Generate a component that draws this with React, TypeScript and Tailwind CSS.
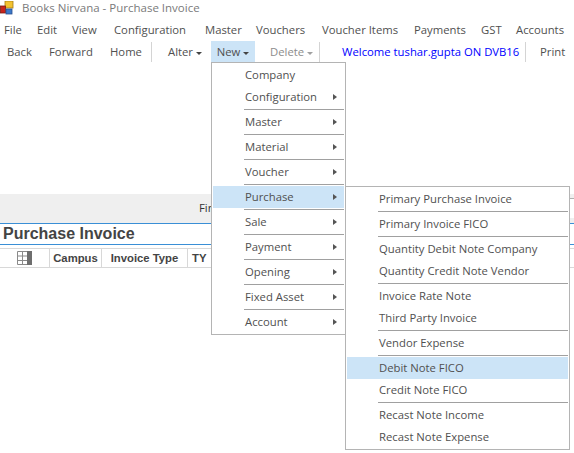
const menuBar = [
  { label: 'File', width: 'w-[33px]' },
  { label: 'Edit', width: 'w-[35px]' },
  { label: 'View', width: 'w-[42px]' },
  { label: 'Configuration', width: 'w-[91px]' },
  { label: 'Master', width: 'w-[51px]' },
  { label: 'Vouchers', width: 'w-[66px]' },
  { label: 'Voucher Items', width: 'w-[92px]' },
  { label: 'Payments', width: 'w-[67px]' },
  { label: 'GST', width: 'w-[35px]' },
  { label: 'Accounts', width: 'w-[58px]' },
];

const mainMenu = [
  { label: 'Company' },
  { label: 'Configuration', arrow: true, sep: true },
  { label: 'Master', arrow: true, sep: true },
  { label: 'Material', arrow: true, sep: true },
  { label: 'Voucher', arrow: true, sep: true },
  { label: 'Purchase', arrow: true, sep: true, active: true },
  { label: 'Sale', arrow: true, sep: true },
  { label: 'Payment', arrow: true, sep: true },
  { label: 'Opening', arrow: true, sep: true },
  { label: 'Fixed Asset', arrow: true, sep: true },
  { label: 'Account', arrow: true },
];

const purchaseMenu = [
  { label: 'Primary Purchase Invoice', sep: true },
  { label: 'Primary Invoice FICO', sep: true },
  { label: 'Quantity Debit Note Company' },
  { label: 'Quantity Credit Note Vendor', sep: true },
  { label: 'Invoice Rate Note' },
  { label: 'Third Party Invoice', sep: true },
  { label: 'Vendor Expense', sep: true },
  { label: 'Debit Note FICO', active: true },
  { label: 'Credit Note FICO', sep: true },
  { label: 'Recast Note Income' },
  { label: 'Recast Note Expense' },
];

type Item = { label: string; arrow?: boolean; sep?: boolean; active?: boolean };

const Caret = ({ muted }: { muted?: boolean }) => (
  <span
    className={`ml-[3px] mt-[1px] h-0 w-0 border-x-[3px] border-t-[3px] border-x-transparent ${
      muted ? 'border-t-[#a0a0a0]' : 'border-t-[#444444]'
    }`}
  />
);

const Separator = () => <span className="h-[20px] w-px bg-[#d4d4d4]" />;

const DropMenu = ({ items, className }: { items: Item[]; className: string }) => (
  <div className={`absolute z-10 flex flex-col border border-[#b4b4b4] bg-white p-px ${className}`}>
    {items.map((item) => (
      <div key={item.label}>
        <div className={`flex h-[22px] items-center justify-between pl-[32px] ${item.active ? 'bg-[#cce4f7]' : ''}`}>
          <span className="whitespace-nowrap">{item.label}</span>
          {item.arrow && (
            <span className="mr-[7px] h-0 w-0 border-y-[3.5px] border-l-[4px] border-y-transparent border-l-[#555555]" />
          )}
        </div>
        {item.sep && (
          <div className="flex h-[3px] items-center pl-[31px]">
            <div className="h-px w-full bg-[#a0a0a0]" />
          </div>
        )}
      </div>
    ))}
  </div>
);

export default function App() {
  return (
    <div className="relative h-[453px] w-[574px] overflow-hidden bg-white font-['Open_Sans',sans-serif] text-[11.3px] text-[#505050]">
      {/* Title bar */}
      <div className="flex h-[20px] items-start">
        <svg width="14" height="14" viewBox="0 0 14 14" className="mt-px">
          <rect x="5" y="0" width="8" height="7" fill="#f2c230" stroke="#a87a10" strokeWidth="0.8" />
          <rect x="0.5" y="5" width="5" height="7" fill="#c8241c" stroke="#7a1810" strokeWidth="0.8" />
          <rect x="6" y="8" width="6" height="5" fill="#3c78c8" stroke="#2a4f90" strokeWidth="0.8" />
        </svg>
        <span className="ml-[8px] text-[11.5px] leading-[16px] text-[#7a7a7a]">Books Nirvana - Purchase Invoice</span>
      </div>

      {/* Menu bar */}
      <div className="flex h-[21px] items-center pl-[4px]">
        {menuBar.map((item) => (
          <span key={item.label} className={`whitespace-nowrap ${item.width}`}>
            {item.label}
          </span>
        ))}
      </div>

      {/* Toolbar */}
      <div className="flex h-[21px] items-center">
        <span className="ml-[7px] w-[42px] pt-[2px]">Back</span>
        <span className="w-[61px] pt-[2px]">Forward</span>
        <span className="w-[41px] pt-[2px]">Home</span>
        <Separator />
        <span className="ml-[16px] flex w-[43px] items-center pt-[2px]">
          Alter
          <Caret />
        </span>
        <span className="flex h-[21px] w-[44px] items-center justify-center bg-[#cce4f7] pt-[2px]">
          New
          <Caret />
        </span>
        <span className="ml-[15px] flex w-[49px] items-center pt-[2px] text-[#8c8c8c]">
          Delete
          <Caret muted />
        </span>
        <Separator />
        <span className="ml-[22px] w-[183px] whitespace-nowrap pt-[2px] text-[#0000ff]">Welcome tushar.gupta ON DVB16</span>
        <Separator />
        <span className="ml-[14px] pt-[2px]">Print</span>
      </div>

      {/* Filter band, behind the menus */}
      <div className="mt-[132px] flex h-[29px] bg-[#efefef]">
        <div className="flex-1 pl-[199px] pt-[6px] text-[#333333]">Find</div>
        <div className="mb-[5px] mt-[4px] w-[4px] border-t border-[#b0b0b0] bg-white" />
      </div>

      {/* Page heading */}
      <div className="h-[22px] border-y border-[#3a8fd6] pl-[3px] font-['Liberation_Sans',sans-serif] text-[16px] font-bold leading-[19px] text-[#444444]">
        Purchase Invoice
      </div>

      {/* Grid header */}
      <div className="mt-[3px] flex h-[20px] items-center border-y border-[#d8d8d8] font-['Liberation_Sans',sans-serif] text-[11.3px] font-bold text-[#444444]">
        <div className="flex h-full w-[50px] items-center justify-center border-r border-[#d8d8d8]">
          <svg width="15" height="14" viewBox="0 0 15 14" fill="none" stroke="#8a8a8a">
            <path d="M.5.5h14v13H.5zM5.5.5v13M10.5.5v13M.5 5h14M.5 9.500h14" />
            <rect x="10" y="0" width="5" height="14" fill="#6e6e6e" stroke="none" />
          </svg>
        </div>
        <div className="flex h-full w-[52px] items-center justify-center border-r border-[#d8d8d8]">Campus</div>
        <div className="flex h-full w-[86px] items-center justify-center border-r border-[#d8d8d8]">Invoice Type</div>
        <div className="pl-[4px]">TY</div>
      </div>

      <DropMenu items={mainMenu} className="left-[211px] top-[62px] w-[135px]" />
      <DropMenu items={purchaseMenu} className="left-[345px] top-[186px] w-[225px]" />
    </div>
  );
}
